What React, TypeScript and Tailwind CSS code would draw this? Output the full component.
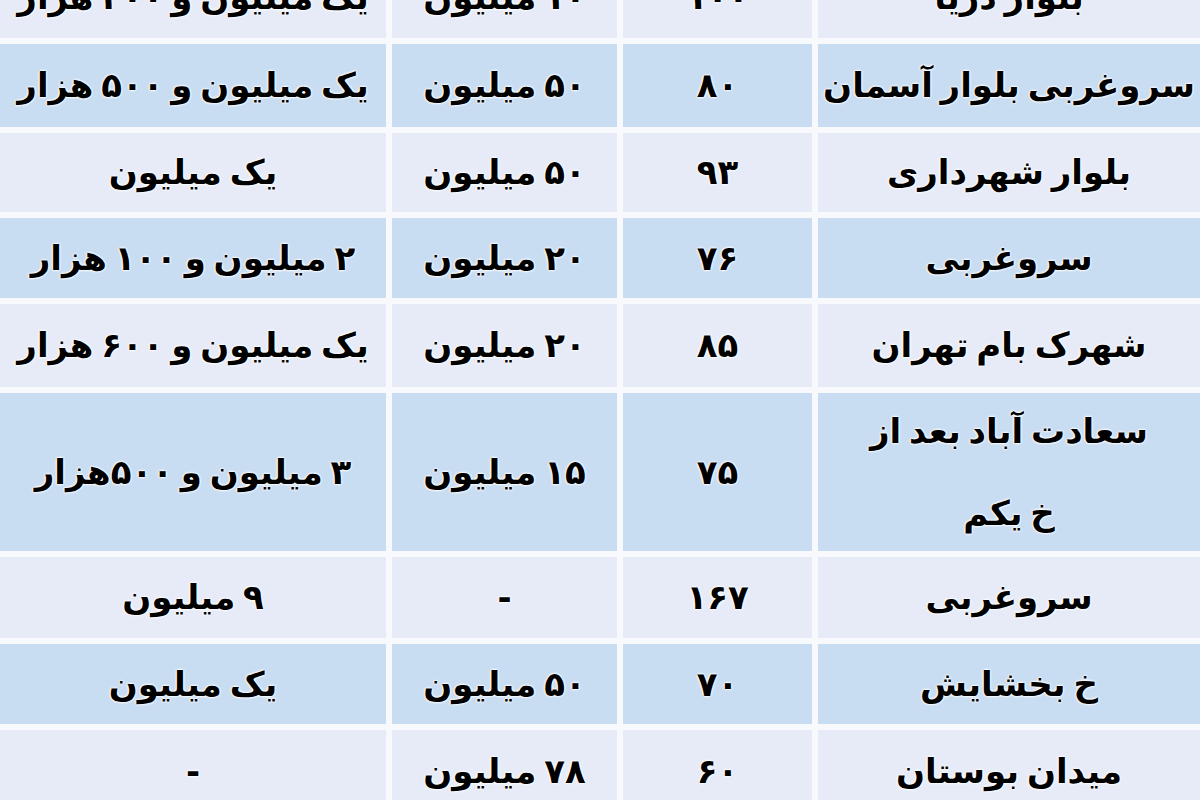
const rows = [
  { h: "h-[82px]", bg: "bg-[#e6ebf7]", rent: "یک میلیون و ۲۰۰ هزار", deposit: "۱۰ میلیون", area: "۱۰۰", place: ["بلوار دریا"] },
  { h: "h-[83px]", bg: "bg-[#c8dcf2]", rent: "یک میلیون و ۵۰۰ هزار", deposit: "۵۰ میلیون", area: "۸۰", place: ["سروغربی بلوار آسمان"] },
  { h: "h-[79px]", bg: "bg-[#e6ebf7]", rent: "یک میلیون", deposit: "۵۰ میلیون", area: "۹۳", place: ["بلوار شهرداری"] },
  { h: "h-[80px]", bg: "bg-[#c8dcf2]", rent: "۲ میلیون و ۱۰۰ هزار", deposit: "۲۰ میلیون", area: "۷۶", place: ["سروغربی"] },
  { h: "h-[83px]", bg: "bg-[#e6ebf7]", rent: "یک میلیون و ۶۰۰ هزار", deposit: "۲۰ میلیون", area: "۸۵", place: ["شهرک بام تهران"] },
  { h: "h-[158px]", bg: "bg-[#c8dcf2]", rent: "۳ میلیون و ۵۰۰هزار", deposit: "۱۵ میلیون", area: "۷۵", place: ["سعادت آباد بعد از", "خ یکم"] },
  { h: "h-[81px]", bg: "bg-[#e6ebf7]", rent: "۹ میلیون", deposit: "-", area: "۱۶۷", place: ["سروغربی"] },
  { h: "h-[80px]", bg: "bg-[#c8dcf2]", rent: "یک میلیون", deposit: "۵۰ میلیون", area: "۷۰", place: ["خ بخشایش"] },
  { h: "h-[82px]", bg: "bg-[#e6ebf7]", rent: "-", deposit: "۷۸ میلیون", area: "۶۰", place: ["میدان بوستان"] },
];

const text =
  "font-bold text-[34px] leading-[1.6] text-black [word-spacing:-4px] [text-shadow:0_0_3px_#fff,0_0_3px_#fff,0_0_2px_#fff]";

function Cell({ bg, children }: { bg: string; children: React.ReactNode }) {
  return (
    <div className={`${bg} flex flex-col items-center justify-center gap-[28px] text-center ${text}`}>
      {children}
    </div>
  );
}

export default function App() {
  return (
    <div className="w-[1200px] h-[800px] overflow-hidden bg-[#f7f9fd] font-['DejaVu_Sans',sans-serif]">
      <div dir="rtl" className="-mt-[44px] flex flex-col gap-[6px]">
        {rows.map((r, i) => (
          <div key={i} className={`grid grid-cols-[382px_189px_225px_386px] gap-x-[6px] ${r.h}`}>
            <Cell bg={r.bg}>
              {r.place.map((p, j) => (
                <span key={j}>{p}</span>
              ))}
            </Cell>
            <Cell bg={r.bg}>{r.area}</Cell>
            <Cell bg={r.bg}>{r.deposit}</Cell>
            <Cell bg={r.bg}>{r.rent}</Cell>
          </div>
        ))}
      </div>
    </div>
  );
}
